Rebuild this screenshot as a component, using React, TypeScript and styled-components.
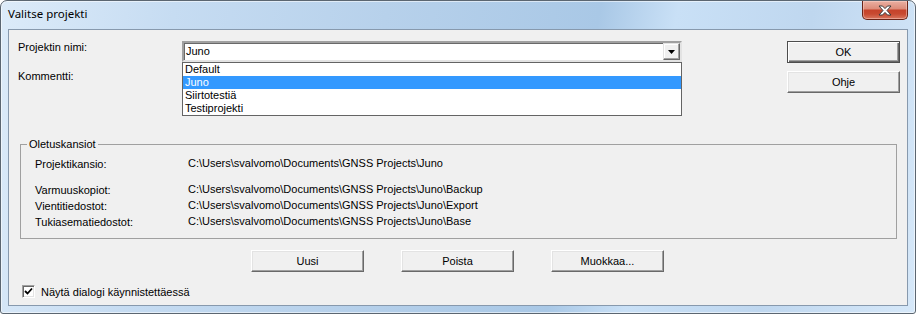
import { Fragment } from "react";
import styled, { createGlobalStyle } from "styled-components";

const GlobalStyle = createGlobalStyle`
  html, body {
    margin: 0;
    padding: 0;
    background: #ffffff;
    overflow: hidden;
  }
  * {
    box-sizing: border-box;
  }
`;

const Window = styled.div`
  width: 916px;
  height: 314px;
  display: flex;
  flex-direction: column;
  padding: 0 7px 7px 7px;
  border: 1px solid #5b6671;
  border-radius: 7px 7px 3px 3px;
  background: linear-gradient(
    100deg,
    #dcebf9 0%,
    #c6dcf2 18%,
    #b7d1eb 40%,
    #a9c8e6 62%,
    #c9e0f6 70%,
    #bfd7ef 84%,
    #d6e8f9 100%
  );
  box-shadow: inset 0 0 0 1px rgba(255, 255, 255, 0.55);
  font-family: "Liberation Sans", Arial, sans-serif;
  font-size: 11px;
  color: #000;
`;

const TitleBar = styled.div`
  height: 28px;
  display: flex;
  justify-content: space-between;
  align-items: flex-start;
`;

const Title = styled.div`
  font-family: "Noto Sans", "Segoe UI", sans-serif;
  font-size: 11.5px;
  line-height: 16px;
  padding-top: 5px;
  color: #000;
`;

const CloseButton = styled.div`
  width: 46px;
  height: 19px;
  display: flex;
  align-items: center;
  justify-content: center;
  border: 1px solid #6a2418;
  border-top: none;
  border-radius: 0 0 5px 5px;
  background: linear-gradient(
    180deg,
    #eab0a2 0%,
    #dd8d7b 42%,
    #c6432b 52%,
    #c84a31 72%,
    #d9765f 100%
  );
  box-shadow: inset 0 0 0 1px rgba(255, 220, 210, 0.45);
`;

const Client = styled.div`
  flex: 1;
  display: flex;
  flex-direction: column;
  background: #f0f0f0;
  border: 1px solid #8799ad;
  padding: 11px 7px 0 9px;
`;

const TopSection = styled.div`
  display: flex;
  align-items: flex-start;
`;

const FieldGrid = styled.div`
  display: grid;
  grid-template-columns: 164px 500px;
  row-gap: 8px;
  align-items: start;
`;

const FieldLabel = styled.div`
  line-height: 13px;
  white-space: nowrap;
`;

const Combo = styled.div`
  position: relative;
  height: 21px;
  display: flex;
  align-items: center;
  background: #fff;
  border: 2px solid;
  border-color: #a0a0a0 #e3e3e3 #e3e3e3 #a0a0a0;
  box-shadow: inset 1px 1px 0 #696969;
`;

const ComboValue = styled.div`
  flex: 1;
  padding-left: 2px;
  line-height: 13px;
`;

const ArrowButton = styled.div`
  width: 17px;
  height: 17px;
  display: flex;
  align-items: center;
  justify-content: center;
  background: #f0f0f0;
  border: 1px solid;
  border-color: #e3e3e3 #696969 #696969 #e3e3e3;
  box-shadow: inset -1px -1px 0 #a0a0a0, inset 1px 1px 0 #fff;
`;

const DropList = styled.ul`
  position: absolute;
  top: 19px;
  left: -2px;
  width: 500px;
  margin: 0;
  padding: 0;
  list-style: none;
  background: #fff;
  border: 1px solid #646464;
  z-index: 2;
`;

const DropItem = styled.li<{ $selected?: boolean }>`
  height: 13px;
  line-height: 13px;
  padding-left: 2px;
  background: ${(p) => (p.$selected ? "#3399ff" : "transparent")};
  color: ${(p) => (p.$selected ? "#fff" : "#000")};
`;

const ButtonColumn = styled.div`
  display: flex;
  flex-direction: column;
  gap: 8px;
  margin-left: 105px;
`;

const Button = styled.div<{ $default?: boolean }>`
  width: 113px;
  height: 22px;
  display: flex;
  align-items: center;
  justify-content: center;
  background: #f0f0f0;
  line-height: 13px;
  border: 1px solid;
  border-color: ${(p) =>
    p.$default ? "#4d4d4d" : "#ffffff #696969 #696969 #ffffff"};
  box-shadow: ${(p) =>
    p.$default
      ? "inset 1px 1px 0 #fff, inset -1px -1px 0 #696969, inset -2px -2px 0 #a0a0a0"
      : "inset -1px -1px 0 #a0a0a0, inset 1px 1px 0 #e3e3e3"};
`;

const Group = styled.fieldset`
  margin: 45px 0 0 2px;
  width: 877px;
  padding: 0 0 8px 14px;
  border: 1px solid #a0a0a0;
  min-width: 0;
`;

const Legend = styled.legend`
  margin-left: -8px;
  padding: 0 2px;
  line-height: 13px;
`;

const PathGrid = styled.div`
  display: grid;
  grid-template-columns: 153px auto;
  margin-top: 5px;
  line-height: 15px;
`;

const PathLabel = styled.div<{ $first?: boolean }>`
  padding-top: 1px;
  margin-bottom: ${(p) => (p.$first ? "10px" : "0")};
  white-space: nowrap;
`;

const PathValue = styled.div<{ $first?: boolean }>`
  margin-bottom: ${(p) => (p.$first ? "10px" : "0")};
  white-space: nowrap;
`;

const ActionRow = styled.div`
  display: flex;
  gap: 37px;
  margin: 11px 0 0 233px;
`;

const CheckRow = styled.div`
  display: flex;
  align-items: center;
  gap: 6px;
  margin: 13px 0 0 4px;
`;

const CheckBox = styled.div`
  width: 13px;
  height: 13px;
  display: flex;
  align-items: center;
  justify-content: center;
  background: #fff;
  border: 1px solid;
  border-color: #a0a0a0 #fff #fff #a0a0a0;
  box-shadow: inset 1px 1px 0 #696969, inset -1px -1px 0 #e3e3e3;
`;

const paths = [
  ["Projektikansio:", "C:\\Users\\svalvomo\\Documents\\GNSS Projects\\Juno"],
  ["Varmuuskopiot:", "C:\\Users\\svalvomo\\Documents\\GNSS Projects\\Juno\\Backup"],
  ["Vientitiedostot:", "C:\\Users\\svalvomo\\Documents\\GNSS Projects\\Juno\\Export"],
  ["Tukiasematiedostot:", "C:\\Users\\svalvomo\\Documents\\GNSS Projects\\Juno\\Base"],
];

const projects = ["Default", "Juno", "Siirtotestiä", "Testiprojekti"];

const App = () => {
  return (
    <>
      <GlobalStyle />
      <Window>
        <TitleBar>
          <Title>Valitse projekti</Title>
          <CloseButton>
            <svg width="14" height="11" viewBox="0 0 14 11">
              <path
                d="M1 1 H4.5 L7 3.6 L9.5 1 H13 L9 5.5 L13 10 H9.5 L7 7.4 L4.5 10 H1 L5 5.5 Z"
                fill="#fff"
                stroke="#3b3b3b"
                strokeWidth="1"
                strokeLinejoin="round"
              />
            </svg>
          </CloseButton>
        </TitleBar>
        <Client>
          <TopSection>
            <FieldGrid>
              <FieldLabel>Projektin nimi:</FieldLabel>
              <Combo>
                <ComboValue>Juno</ComboValue>
                <ArrowButton>
                  <svg width="7" height="4" viewBox="0 0 7 4">
                    <path d="M0 0 H7 L3.5 4 Z" fill="#000" />
                  </svg>
                </ArrowButton>
                <DropList>
                  {projects.map((name) => (
                    <DropItem key={name} $selected={name === "Juno"}>
                      {name}
                    </DropItem>
                  ))}
                </DropList>
              </Combo>
              <FieldLabel>Kommentti:</FieldLabel>
            </FieldGrid>
            <ButtonColumn>
              <Button $default>OK</Button>
              <Button>Ohje</Button>
            </ButtonColumn>
          </TopSection>

          <Group>
            <Legend>Oletuskansiot</Legend>
            <PathGrid>
              {paths.map(([label, value], i) => (
                <Fragment key={label}>
                  <PathLabel $first={i === 0}>{label}</PathLabel>
                  <PathValue $first={i === 0}>{value}</PathValue>
                </Fragment>
              ))}
            </PathGrid>
          </Group>

          <ActionRow>
            <Button>Uusi</Button>
            <Button>Poista</Button>
            <Button>Muokkaa...</Button>
          </ActionRow>

          <CheckRow>
            <CheckBox>
              <svg width="9" height="9" viewBox="0 0 9 9">
                <path
                  d="M1 4 L3.5 6.5 L8 1.5"
                  fill="none"
                  stroke="#000"
                  strokeWidth="1.8"
                />
              </svg>
            </CheckBox>
            <span>Näytä dialogi käynnistettäessä</span>
          </CheckRow>
        </Client>
      </Window>
    </>
  );
};

export default App;
